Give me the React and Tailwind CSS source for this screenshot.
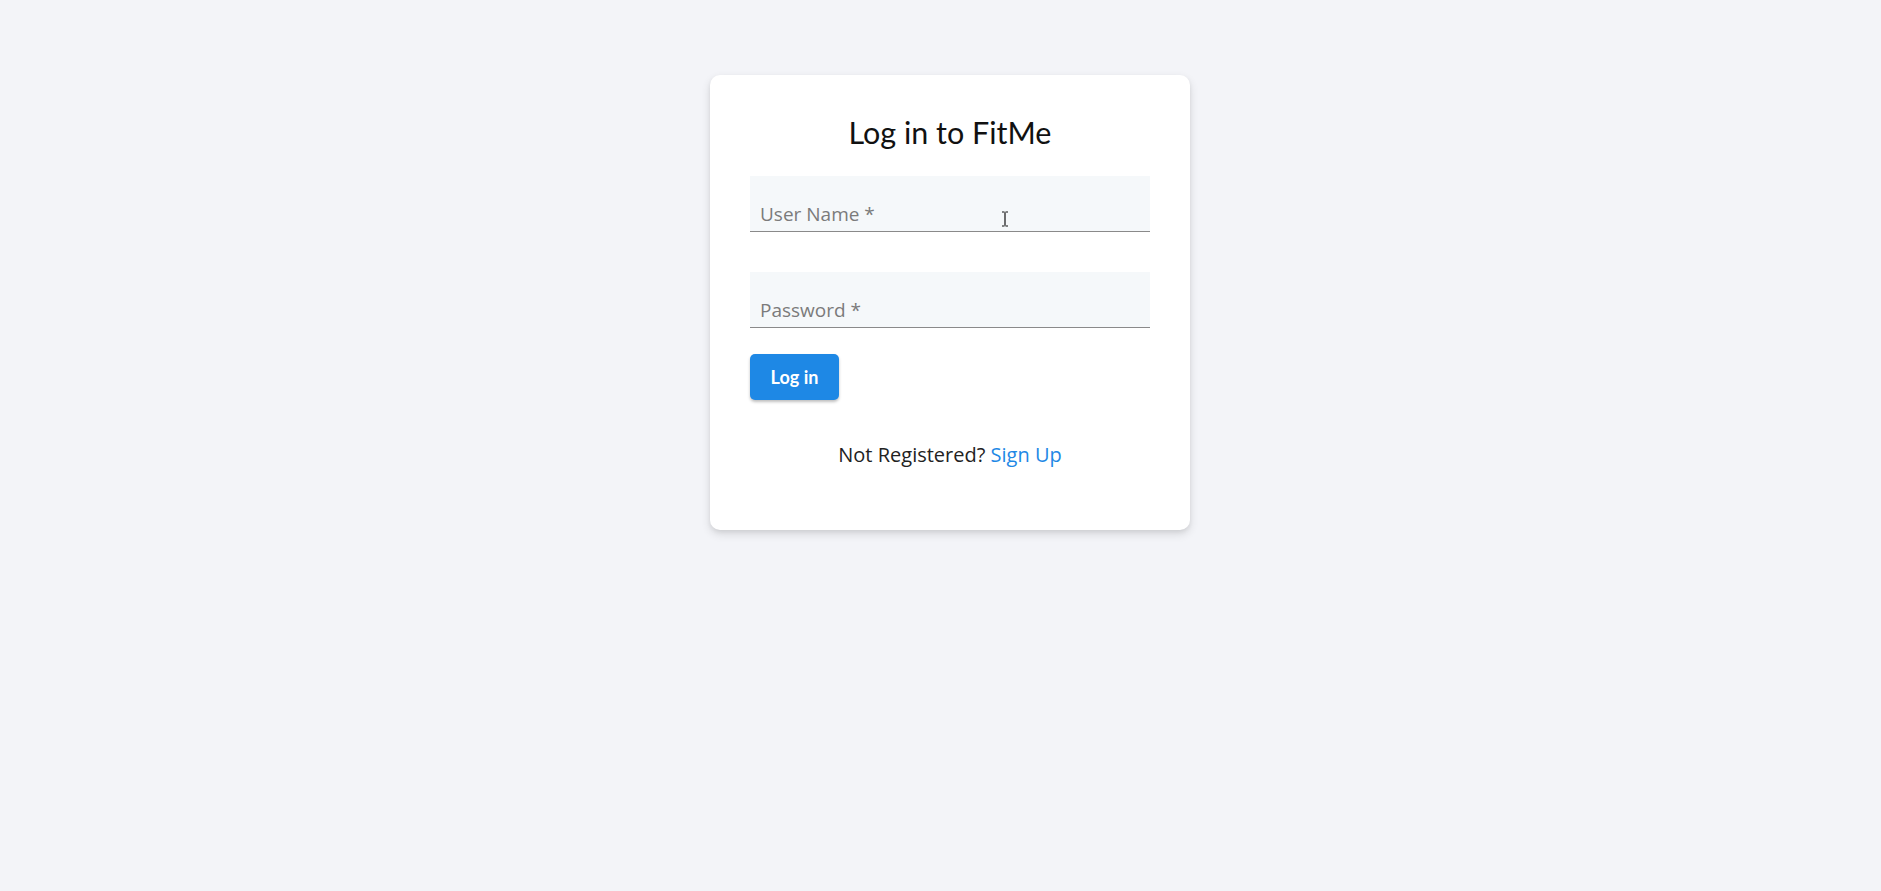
export default function App() {
  return (
    <div className="min-h-screen w-full bg-[#f3f4f8] pl-[19px] pt-[75px]" style={{ fontFamily: '"Open Sans", "Noto Sans", sans-serif' }}>
      <div className="mx-auto flex w-[480px] flex-col rounded-[10px] bg-white px-10 pb-[61px] pt-[37px] shadow-[0_4px_10px_rgba(0,0,0,0.12),0_2px_4px_rgba(0,0,0,0.06)]">
        <h1 className="text-center text-[30.5px] font-normal leading-[40px] text-[#111]" style={{ fontFamily: 'Lato, "Noto Sans", sans-serif' }}>Log in to FitMe</h1>
        <div className="relative mt-[24px] flex h-[56px] items-end border-b border-[#8a8a8a] bg-[#f5f8fa] px-[10px] pb-[5px]">
          <span className="text-[19px] leading-[24px] text-[#7b7b7b]">User Name *</span>
          <svg className="absolute left-[251px] top-[35px]" width="8" height="16" viewBox="0 0 8 16">
            <path d="M1 1h2.5M4.5 1H7M4 1.5v13M1 15h2.5M4.5 15H7" stroke="#111" strokeWidth="1.2" fill="none" />
          </svg>
        </div>
        <div className="mt-[40px] flex h-[56px] items-end border-b border-[#8a8a8a] bg-[#f5f8fa] px-[10px] pb-[5px]">
          <span className="text-[19px] leading-[24px] text-[#7b7b7b]">Password *</span>
        </div>
        <div className="mt-[26px]">
          <button className="h-[46px] w-[89px] rounded-[5px] bg-[#1e88e5] text-[18px] font-bold text-white shadow-[0_2px_3px_rgba(0,0,0,0.25)]" style={{ fontFamily: 'Lato, "Noto Sans", sans-serif' }}>Log in</button>
        </div>
        <p className="mt-[41px] text-center text-[20px] leading-[28px] text-[#222]">
          Not Registered? <span className="text-[#1e88e5]">Sign Up</span>
        </p>
      </div>
    </div>
  );
}
